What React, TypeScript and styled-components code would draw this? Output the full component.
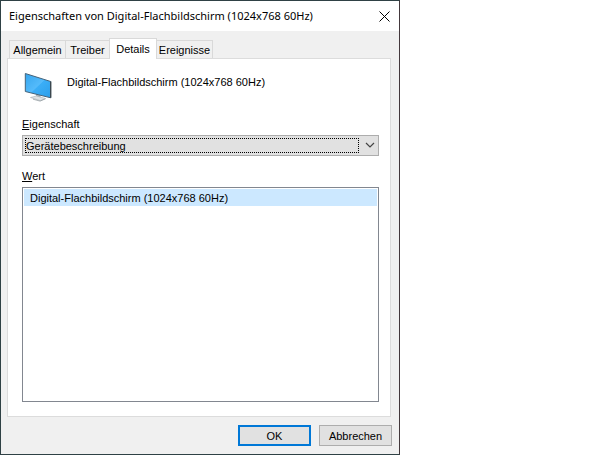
import React, { useState } from "react";
import styled, { createGlobalStyle } from "styled-components";

const GlobalStyle = createGlobalStyle`
  * { box-sizing: border-box; }
  body { margin: 0; background: #fff; }
  button, select { font: inherit; color: inherit; }
`;

const Dialog = styled.section`
  width: 100%;
  max-width: 400px;
  border: 1px solid #2f4145;
  border-right-color: #43383c;
  background: #f0f0f0;
  color: #000;
  font: 11px/16px "Liberation Sans", Arial, sans-serif;
`;

const TitleBar = styled.header`
  display: flex;
  align-items: center;
  justify-content: space-between;
  height: 30px;
  padding-left: 8px;
  background: #fff;
`;

const Title = styled.h1`
  margin: 0;
  font: 400 11px/16px "Noto Sans", "Segoe UI", sans-serif;
`;

const CloseButton = styled.button`
  display: flex;
  align-items: center;
  justify-content: center;
  width: 30px;
  height: 28px;
  padding: 0;
  border: 0;
  background: transparent;
`;

const TabList = styled.div`
  display: flex;
  align-items: flex-end;
  height: 27px;
  padding-left: 8px;
`;

const Tab = styled.button<{ $active: boolean; $width: number }>`
  position: relative;
  z-index: ${(p) => (p.$active ? 1 : 0)};
  width: ${(p) => p.$width}px;
  height: ${(p) => (p.$active ? 21 : 18)}px;
  margin: 0 -1px ${(p) => (p.$active ? -1 : 0)}px 0;
  padding: 0;
  border: 1px solid #d9d9d9;
  border-bottom: 0;
  background: ${(p) => (p.$active ? "#fff" : "#f0f0f0")};
  line-height: 18px;
  white-space: nowrap;
`;

const Panel = styled.div`
  margin: 0 8px 0 6px;
  padding: 12px 11px 14px 14px;
  border: 1px solid #dcdcdc;
  background: #fff;
`;

const DeviceHeader = styled.div`
  display: flex;
  gap: 13px;
  height: 32px;
  margin-bottom: 13px;
`;

const DeviceName = styled.span`
  padding-top: 3px;
`;

const FieldLabel = styled.label`
  display: block;
  margin-bottom: 3px;
`;

const SelectFrame = styled.div`
  position: relative;
  margin-bottom: 12px;
`;

const Select = styled.select`
  display: block;
  width: 100%;
  height: 21px;
  padding: 0 22px 0 3px;
  border: 1px solid #adadad;
  border-radius: 0;
  outline: 0;
  background: #e1e1e1;
  appearance: none;
`;

const FocusRing = styled.span`
  position: absolute;
  inset: 3px 20px 3px 3px;
  border: 1px dotted #000;
  pointer-events: none;
`;

const Chevron = styled.svg`
  position: absolute;
  top: 7px;
  right: 4px;
  pointer-events: none;
`;

const ValueList = styled.ul`
  min-height: 215px;
  margin: 0;
  padding: 1px;
  border: 1px solid #828790;
  background: #fff;
  list-style: none;
`;

const ValueItem = styled.li`
  height: 17px;
  padding-left: 6px;
  background: #cce8ff;
  line-height: 18px;
`;

const ButtonBar = styled.footer`
  display: flex;
  justify-content: flex-end;
  gap: 8px;
  padding: 8px 7px;
`;

const PushButton = styled.button<{ $primary?: boolean }>`
  width: 73px;
  height: 21px;
  padding: 0;
  border: ${(p) => (p.$primary ? "2px solid #0078d7" : "1px solid #adadad")};
  background: #e1e1e1;
`;

const tabs = [
  { name: "Allgemein", width: 57 },
  { name: "Treiber", width: 45 },
  { name: "Details", width: 48 },
  { name: "Ereignisse", width: 57 },
];

function CloseIcon() {
  return (
    <svg width="11" height="11" viewBox="0 0 11 11" aria-hidden="true">
      <path d="M.5.5l10 10M10.5.5l-10 10" stroke="#000" strokeWidth="1" />
    </svg>
  );
}

function MonitorIcon() {
  return (
    <svg width="32" height="32" viewBox="0 0 32 32" aria-hidden="true">
      <defs>
        <linearGradient id="screen" x1="0" y1="0" x2="1" y2="1">
          <stop offset="0" stopColor="#35a5ee" />
          <stop offset=".5" stopColor="#55bbfb" />
          <stop offset=".52" stopColor="#3baef7" />
          <stop offset="1" stopColor="#2b9eea" />
        </linearGradient>
      </defs>
      <path d="M14 23l4 1 1 3h-5z" fill="#aeb6ba" />
      <path d="M8.5 26.5l6-1.5 9 2.5-5 2.2z" fill="#dde2e5" stroke="#a5adb2" strokeWidth=".6" />
      <path d="M11 28.2l7 1.9 5.5-2.3" fill="none" stroke="#8d969b" strokeWidth=".7" />
      <path d="M3.3 2.5l25.4 8v16.3l-25.4-6.3z" fill="url(#screen)" stroke="#45637a" />
      <path d="M28.7 10.5v16.3" stroke="#3b4348" strokeWidth="1.2" />
    </svg>
  );
}

export default function App() {
  const [active, setActive] = useState("Details");
  return (
    <>
      <GlobalStyle />
      <Dialog role="dialog" aria-labelledby="dialog-title">
        <TitleBar>
          <Title id="dialog-title">Eigenschaften von Digital-Flachbildschirm (1024x768 60Hz)</Title>
          <CloseButton type="button" aria-label="Schließen">
            <CloseIcon />
          </CloseButton>
        </TitleBar>
        <TabList role="tablist">
          {tabs.map((t) => (
            <Tab
              key={t.name}
              type="button"
              role="tab"
              aria-selected={t.name === active}
              $active={t.name === active}
              $width={t.width}
              onClick={() => setActive(t.name)}
            >
              {t.name}
            </Tab>
          ))}
        </TabList>
        <Panel role="tabpanel">
          <DeviceHeader>
            <MonitorIcon />
            <DeviceName>Digital-Flachbildschirm (1024x768 60Hz)</DeviceName>
          </DeviceHeader>
          <FieldLabel htmlFor="property">
            <u>E</u>igenschaft
          </FieldLabel>
          <SelectFrame>
            <Select id="property">
              <option>Gerätebeschreibung</option>
            </Select>
            <FocusRing />
            <Chevron width="10" height="7" viewBox="0 0 10 7" aria-hidden="true">
              <path d="M1 1l4 4 4-4" fill="none" stroke="#444" strokeWidth="1.2" />
            </Chevron>
          </SelectFrame>
          <FieldLabel as="div" id="value-label">
            <u>W</u>ert
          </FieldLabel>
          <ValueList role="listbox" aria-labelledby="value-label" tabIndex={0}>
            <ValueItem role="option" aria-selected="true">
              Digital-Flachbildschirm (1024x768 60Hz)
            </ValueItem>
          </ValueList>
        </Panel>
        <ButtonBar>
          <PushButton type="button" $primary>OK</PushButton>
          <PushButton type="button">Abbrechen</PushButton>
        </ButtonBar>
      </Dialog>
    </>
  );
}
